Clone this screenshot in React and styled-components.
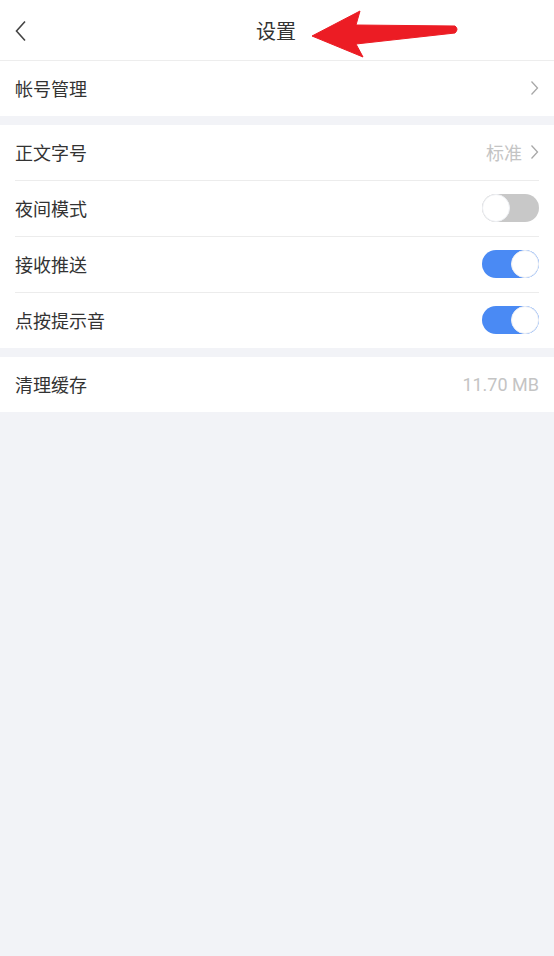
import React from 'react'
import styled, { createGlobalStyle } from 'styled-components'

const GlobalStyle = createGlobalStyle`
    html, body {
        margin: 0;
        padding: 0;
        background: #f2f3f7;
    }
    body {
        font-family: "Noto Sans CJK SC", "Noto Sans", sans-serif;
    }
`

const Page = styled.div`
    width: 554px;
    min-height: 956px;
    background: #f2f3f7;
`

const Header = styled.header`
    position: relative;
    height: 60px;
    background: #fff;
    border-bottom: 1px solid #ededed;
    display: flex;
    align-items: center;
    justify-content: center;
`

const BackButton = styled.button`
    position: absolute;
    left: 12px;
    top: 18px;
    width: 18px;
    height: 26px;
    padding: 0;
    border: none;
    background: none;
    display: flex;
    align-items: center;
    justify-content: center;
`

const Title = styled.h1`
    margin: 2px 0 0 -2px;
    font-size: 20px;
    font-weight: 400;
    color: #333;
    line-height: 1;
`

const Annotation = styled.svg`
    position: absolute;
    left: 0;
    top: 0;
    pointer-events: none;
`

const Section = styled.section`
    background: #fff;
    margin-bottom: 9px;
`

const Row = styled.div`
    height: 54px;
    margin: 0 15px;
    padding-bottom: 1px;
    display: flex;
    align-items: center;
    justify-content: space-between;
    border-top: ${p => (p.$first ? 'none' : '1px solid #ececec')};
`

const Label = styled.span`
    font-size: 18px;
    color: #333;
`

const Value = styled.span`
    display: flex;
    align-items: center;
    gap: 8px;
    font-size: 18px;
    color: #c4c4c4;
    font-family: ${p => (p.$latin ? '"Roboto", "Noto Sans", sans-serif' : 'inherit')};
`

const Track = styled.div`
    position: relative;
    width: 57px;
    height: 28px;
    border-radius: 14px;
    background: ${p => (p.$on ? '#4a8af4' : '#c8c8c8')};
`

const Knob = styled.div`
    position: absolute;
    top: 0;
    left: ${p => (p.$on ? '29px' : '0')};
    width: 28px;
    height: 28px;
    box-sizing: border-box;
    border-radius: 50%;
    background: #fff;
    border: 1px solid #eef0f4;
`

const Chevron = () => (
    <svg width="9" height="16" viewBox="0 0 9 16">
        <path d="M1.5 1.5 L7.5 8 L1.5 14.5" fill="none" stroke="#a8a8a8" strokeWidth="1.3" />
    </svg>
)

const Toggle = ({ on }) => (
    <Track $on={on}>
        <Knob $on={on} />
    </Track>
)

const App = () => (
    <Page>
        <GlobalStyle />
        <Header>
            <BackButton>
                <svg width="14" height="22" viewBox="0 0 14 22">
                    <path d="M11 1.5 L2.5 11 L11 20.5" fill="none" stroke="#444" strokeWidth="1.6" />
                </svg>
            </BackButton>
            <Title>设置</Title>
            <Annotation width="554" height="60" viewBox="0 0 554 60">
                <path
                    d="M312 36 L360 11 L356 25 L455 26 Q459 29 455 33 L356 44 L363 57 Z"
                    fill="#ec1c24"
                    stroke="#ec1c24"
                    strokeWidth="1"
                    strokeLinejoin="round"
                />
            </Annotation>
        </Header>

        <Section>
            <Row $first>
                <Label>帐号管理</Label>
                <Value><Chevron /></Value>
            </Row>
        </Section>

        <Section>
            <Row $first>
                <Label>正文字号</Label>
                <Value>标准<Chevron /></Value>
            </Row>
            <Row>
                <Label>夜间模式</Label>
                <Toggle on={false} />
            </Row>
            <Row>
                <Label>接收推送</Label>
                <Toggle on />
            </Row>
            <Row>
                <Label>点按提示音</Label>
                <Toggle on />
            </Row>
        </Section>

        <Section>
            <Row $first>
                <Label>清理缓存</Label>
                <Value $latin>11.70 MB</Value>
            </Row>
        </Section>
    </Page>
)

export default App
